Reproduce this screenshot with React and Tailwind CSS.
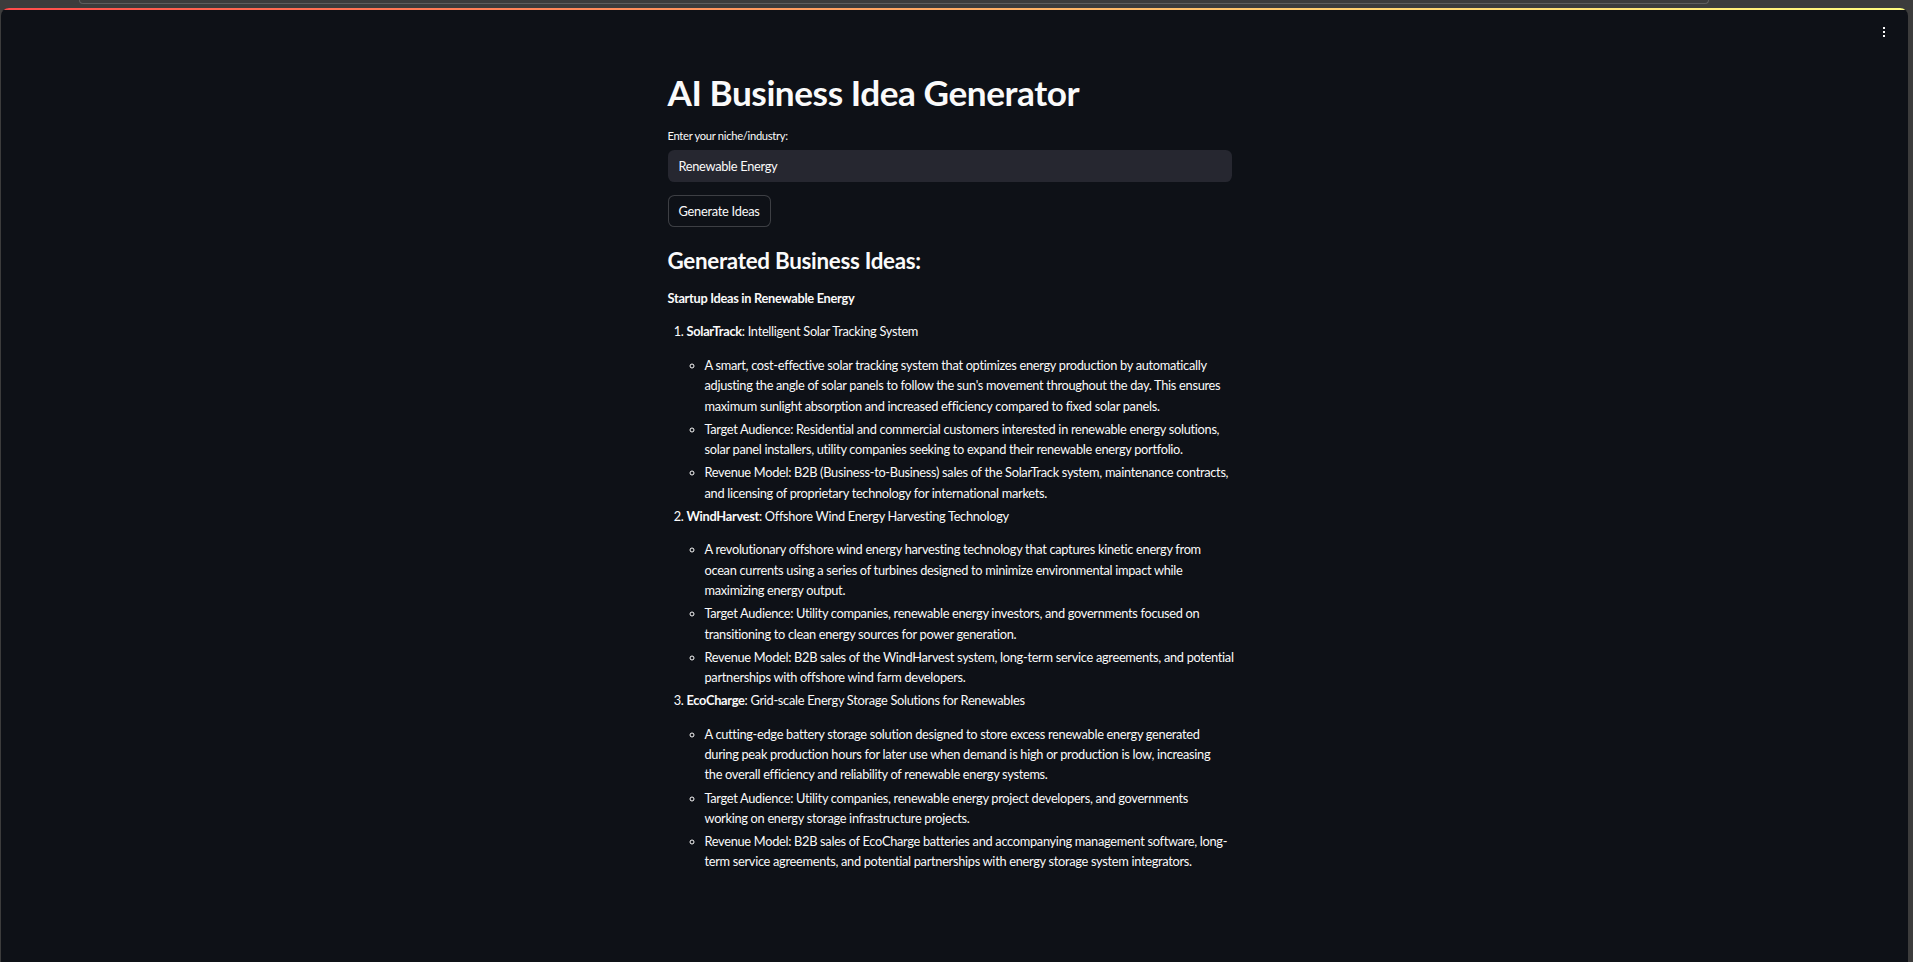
import React from "react";

// line breaks follow the original rendering
const IDEAS = [
    {
        name: "SolarTrack",
        title: "Intelligent Solar Tracking System",
        points: [
            "A smart, cost-effective solar tracking system that optimizes energy production by automatically\nadjusting the angle of solar panels to follow the sun's movement throughout the day. This ensures\nmaximum sunlight absorption and increased efficiency compared to fixed solar panels.",
            "Target Audience: Residential and commercial customers interested in renewable energy solutions,\nsolar panel installers, utility companies seeking to expand their renewable energy portfolio.",
            "Revenue Model: B2B (Business-to-Business) sales of the SolarTrack system, maintenance contracts,\nand licensing of proprietary technology for international markets."
        ]
    },
    {
        name: "WindHarvest",
        title: "Offshore Wind Energy Harvesting Technology",
        points: [
            "A revolutionary offshore wind energy harvesting technology that captures kinetic energy from\nocean currents using a series of turbines designed to minimize environmental impact while\nmaximizing energy output.",
            "Target Audience: Utility companies, renewable energy investors, and governments focused on\ntransitioning to clean energy sources for power generation.",
            "Revenue Model: B2B sales of the WindHarvest system, long-term service agreements, and potential\npartnerships with offshore wind farm developers."
        ]
    },
    {
        name: "EcoCharge",
        title: "Grid-scale Energy Storage Solutions for Renewables",
        points: [
            "A cutting-edge battery storage solution designed to store excess renewable energy generated\nduring peak production hours for later use when demand is high or production is low, increasing\nthe overall efficiency and reliability of renewable energy systems.",
            "Target Audience: Utility companies, renewable energy project developers, and governments\nworking on energy storage infrastructure projects.",
            "Revenue Model: B2B sales of EcoCharge batteries and accompanying management software, long-\nterm service agreements, and potential partnerships with energy storage system integrators."
        ]
    }
];

const App = () => {
    return (
        <div className="min-h-screen bg-[#3c3c3c] flex flex-col font-['Lato','Liberation_Sans',sans-serif] text-[#fafafa]">
            {/* browser chrome strip */}
            <div className="h-[8px] overflow-hidden">
                <div className="ml-[79px] w-[1630px] h-[4px] border-x border-b border-[#5e5e5e] rounded-b-[8px]" />
            </div>

            <div className="flex-1 ml-[1px] mr-[5px] bg-[#0e1117] rounded-t-[8px] overflow-hidden flex flex-col">
                <div className="h-[2px] bg-linear-to-r from-[#ff4b4b] to-[#fffd80]" />

                {/* header */}
                <div className="h-[50px] flex justify-end pt-[17px] pr-[23px]">
                    <div className="flex flex-col gap-[2px]">
                        <span className="w-[2px] h-[2px] bg-[#fafafa]" />
                        <span className="w-[2px] h-[2px] bg-[#fafafa]" />
                        <span className="w-[2px] h-[2px] bg-[#fafafa]" />
                    </div>
                </div>

                <div className="flex justify-center pr-[10px]">
                    <div className="w-[564px] pt-[11px] pb-[100px] text-[12.8px] leading-[1.6] tracking-[-0.3px]">
                        <h1 className="text-[35.2px] leading-[1.2] font-bold tracking-[-0.45px]">AI Business Idea Generator</h1>

                        <label className="block mt-[14px] text-[11.2px] leading-[1.6]">Enter your niche/industry:</label>
                        <input
                            type="text"
                            defaultValue="Renewable Energy"
                            className="mt-[5px] block w-full h-[32px] px-[11px] rounded-[6.4px] bg-[#262730] text-[12.8px] text-[#fafafa] tracking-[-0.3px] outline-none"
                        />

                        <button className="mt-[13px] h-[32px] px-[10px] rounded-[6.4px] border border-[rgba(250,250,250,0.2)] bg-[#0e1117] text-[12.8px] tracking-[-0.25px]">
                            Generate Ideas
                        </button>

                        <h3 className="mt-[21px] text-[22.4px] leading-[1.2] font-bold tracking-[-0.3px]">Generated Business Ideas:</h3>

                        <p className="mt-[13px] mb-[12.8px] font-bold">Startup Ideas in Renewable Energy</p>

                        <ol className="list-decimal pl-[19px]">
                            {IDEAS.map((idea) => (
                                <li key={idea.name} className="my-[2.56px]">
                                    <p className="mb-[13px]">
                                        <strong>{idea.name}</strong>: {idea.title}
                                    </p>
                                    <ul className="list-[circle] pl-[18px]">
                                        {idea.points.map((pt, i) => (
                                            <li key={i} className="my-[2.56px] whitespace-pre">{pt}</li>
                                        ))}
                                    </ul>
                                </li>
                            ))}
                        </ol>
                    </div>
                </div>
            </div>
        </div>
    );
};

export default App;
